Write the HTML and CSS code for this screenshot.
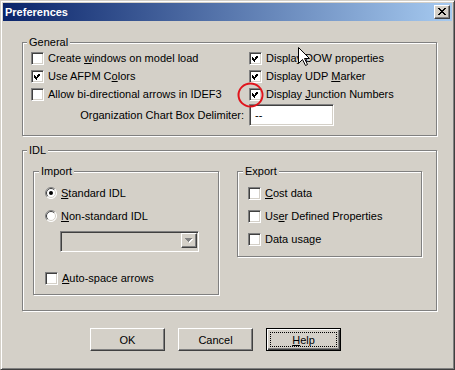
FILE: index.html
```html
<!DOCTYPE html>
<html lang="en">
<head>
  <meta charset="UTF-8" />
  <title>Preferences</title>
  <link rel="stylesheet" href="styles.css">
</head>
<body>
  <div class="window">
    <div class="titlebar">
      <span class="title">Preferences</span>
      <span class="close-btn">
        <svg width="8" height="7" viewBox="0 0 8 7" shape-rendering="crispEdges"><path d="M0 0h2v1H0zM6 0h2v1H6zM1 1h2v1H1zM5 1h2v1H5zM2 2h4v1H2zM3 3h2v1H3zM2 4h4v1H2zM1 5h2v1H1zM5 5h2v1H5zM0 6h2v1H0zM6 6h2v1H6z" fill="#000"/></svg>
      </span>
    </div>

    <div class="client">
      <fieldset class="group general">
        <legend>General</legend>
        <div class="general-grid">
          <label class="check"><span class="box"></span><span>Create <u>w</u>indows on model load</span></label>
          <label class="check"><span class="box"><svg width="7" height="7" viewBox="0 0 7 7" shape-rendering="crispEdges"><path d="M0 2h1v3H0zM1 3h1v3H1zM2 4h1v3H2zM3 3h1v3H3zM4 2h1v3H4zM5 1h1v3H5zM6 0h1v3H6z"/></svg></span><span>Display DOW properties</span></label>
          <label class="check"><span class="box"><svg width="7" height="7" viewBox="0 0 7 7" shape-rendering="crispEdges"><path d="M0 2h1v3H0zM1 3h1v3H1zM2 4h1v3H2zM3 3h1v3H3zM4 2h1v3H4zM5 1h1v3H5zM6 0h1v3H6z"/></svg></span><span>Use AFPM C<u>o</u>lors</span></label>
          <label class="check"><span class="box"><svg width="7" height="7" viewBox="0 0 7 7" shape-rendering="crispEdges"><path d="M0 2h1v3H0zM1 3h1v3H1zM2 4h1v3H2zM3 3h1v3H3zM4 2h1v3H4zM5 1h1v3H5zM6 0h1v3H6z"/></svg></span><span>Display UDP <u>M</u>arker</span></label>
          <label class="check"><span class="box"></span><span>Allow bi-directional arrows in IDEF3</span></label>
          <label class="check"><span class="box"><svg width="7" height="7" viewBox="0 0 7 7" shape-rendering="crispEdges"><path d="M0 2h1v3H0zM1 3h1v3H1zM2 4h1v3H2zM3 3h1v3H3zM4 2h1v3H4zM5 1h1v3H5zM6 0h1v3H6z"/></svg></span><span>Display <u>J</u>unction Numbers</span></label>
        </div>
        <div class="delim">
          <span class="delim-label">Organization Chart Box Delimiter:</span>
          <span class="field">--</span>
        </div>
      </fieldset>

      <fieldset class="group idl">
        <legend>IDL</legend>
        <div class="idl-cols">
          <fieldset class="group sub import">
            <legend>Import</legend>
            <div class="sub-body">
              <label class="check"><span class="radio"><svg width="12" height="12" viewBox="0 0 12 12"><circle cx="6" cy="6" r="5.5" fill="#fff"/><path d="M2.1 9.9A5.5 5.5 0 0 1 9.9 2.1" fill="none" stroke="#808080"/><path d="M9.9 2.1A5.5 5.5 0 0 1 2.1 9.9" fill="none" stroke="#fff"/><path d="M2.8 9.2A4.5 4.5 0 0 1 9.2 2.8" fill="none" stroke="#404040"/><path d="M9.2 2.8A4.5 4.5 0 0 1 2.8 9.2" fill="none" stroke="#d4d0c8"/><circle cx="6" cy="6" r="2" fill="#000"/></svg></span><span><u>S</u>tandard IDL</span></label>
              <label class="check"><span class="radio"><svg width="12" height="12" viewBox="0 0 12 12"><circle cx="6" cy="6" r="5.5" fill="#fff"/><path d="M2.1 9.9A5.5 5.5 0 0 1 9.9 2.1" fill="none" stroke="#808080"/><path d="M9.9 2.1A5.5 5.5 0 0 1 2.1 9.9" fill="none" stroke="#fff"/><path d="M2.8 9.2A4.5 4.5 0 0 1 9.2 2.8" fill="none" stroke="#404040"/><path d="M9.2 2.8A4.5 4.5 0 0 1 2.8 9.2" fill="none" stroke="#d4d0c8"/></svg></span><span><u>N</u>on-standard IDL</span></label>
              <div class="combo">
                <span class="combo-btn">
                  <svg width="8" height="5" viewBox="0 0 8 5" shape-rendering="crispEdges"><path d="M1 1h7v1H1zM2 2h5v1H2zM3 3h3v1H3zM4 4h1v1H4z" fill="#fff"/><path d="M0 0h7v1H0zM1 1h5v1H1zM2 2h3v1H2zM3 3h1v1H3z" fill="#808080"/></svg>
                </span>
              </div>
              <label class="check auto"><span class="box"></span><span><u>A</u>uto-space arrows</span></label>
            </div>
          </fieldset>

          <fieldset class="group sub export">
            <legend>Export</legend>
            <div class="sub-body">
              <label class="check"><span class="box"></span><span><u>C</u>ost data</span></label>
              <label class="check"><span class="box"></span><span>Us<u>e</u>r Defined Properties</span></label>
              <label class="check"><span class="box"></span><span>Data usa<u>g</u>e</span></label>
            </div>
          </fieldset>
        </div>
      </fieldset>

      <div class="buttons">
        <button class="btn">OK</button>
        <button class="btn">Cancel</button>
        <button class="btn default"><span class="focus"><u>H</u>elp</span></button>
      </div>
    </div>

    <!-- annotation + mouse pointer from the screenshot -->
    <svg class="overlay" width="455" height="370" viewBox="0 0 455 370">
      <ellipse cx="250.5" cy="95" rx="12" ry="11.5" fill="none" stroke="#e0141c" stroke-width="2"/>
      <path transform="translate(298 47)" d="M0.5 0.5V16.5L4.5 12.5L7.5 18.5L9.5 17.5L6.5 11.5H11.5Z" fill="#fff" stroke="#000"/>
    </svg>
  </div>
</body>
</html>
```

FILE: styles.css
```css
* {
  box-sizing: border-box;
}

body {
  margin: 0;
  background: #d4d0c8;
  font-family: "Liberation Sans", Arial, sans-serif;
  font-size: 11px;
  color: #000;
}

.window {
  position: relative;
  width: 455px;
  height: 370px;
  padding: 2px;
  background: #d4d0c8;
  border: 1px solid;
  border-color: #d4d0c8 #404040 #404040 #d4d0c8;
  box-shadow: inset 1px 1px #fff, inset -1px -1px #808080;
  display: flex;
  flex-direction: column;
}

.titlebar {
  height: 18px;
  padding: 0 2px;
  background: linear-gradient(90deg, #0a246a, #a6caf0);
  display: flex;
  align-items: center;
  justify-content: space-between;
}

.title {
  color: #fff;
  font-weight: bold;
}

.close-btn,
.combo-btn {
  background: #d4d0c8;
  border: 1px solid;
  border-color: #fff #404040 #404040 #fff;
  box-shadow: inset -1px -1px #808080;
  display: flex;
  align-items: center;
  justify-content: center;
}

.close-btn {
  width: 16px;
  height: 14px;
  padding: 0 0 1px 0;
}

.client {
  padding: 15px 15px 0 19px;
}

/* etched group boxes */
.group {
  margin: 0;
  min-width: 0;
  padding: 0 4px 9px 4px;
  border: 1px solid #808080;
  box-shadow: inset 1px 1px #fff, 1px 1px #fff;
}

.group legend {
  padding: 0 2px;
  line-height: 13px;
  background: #d4d0c8;
}

.general-grid {
  display: grid;
  grid-template-columns: 218px 1fr;
  grid-auto-rows: 18px;
  padding-left: 4px;
}

.check {
  height: 18px;
  display: flex;
  align-items: center;
  gap: 4px;
  white-space: nowrap;
}

.box {
  width: 13px;
  height: 13px;
  flex: none;
  padding: 3px;
  background: #fff;
  border: 1px solid;
  border-color: #808080 #fff #fff #808080;
  box-shadow: inset 1px 1px #404040, inset -1px -1px #d4d0c8;
  display: flex;
}

.box svg {
  margin: -1px 0 0 -1px;
}

.radio {
  width: 12px;
  height: 12px;
  flex: none;
  display: flex;
}

.delim {
  display: grid;
  grid-template-columns: 218px 1fr;
  align-items: center;
  margin-top: 1px;
  padding-left: 4px;
}

.delim-label {
  justify-self: end;
  padding-right: 5px;
}

.field {
  width: 85px;
  height: 22px;
  padding-left: 5px;
  background: #fff;
  border: 1px solid;
  border-color: #808080 #fff #fff #808080;
  box-shadow: inset 1px 1px #404040, inset -1px -1px #d4d0c8;
  display: flex;
  align-items: center;
}

.idl {
  margin-top: 8px;
  padding-bottom: 15px;
}

.idl-cols {
  display: flex;
  align-items: flex-start;
  gap: 18px;
  padding: 8px 0 0 6px;
}

.sub {
  padding: 0 5px 7px 5px;
}

.import {
  width: 186px;
}

.export {
  width: 185px;
  padding-bottom: 8px;
}

.sub-body {
  padding: 6px 0 0 6px;
}

.export .sub-body {
  padding-left: 5px;
}

.sub-body .check + .check {
  margin-top: 5px;
}

.combo {
  width: 139px;
  height: 21px;
  margin: 6px 0 0 15px;
  padding: 2px;
  background: #d4d0c8;
  border: 1px solid;
  border-color: #808080 #fff #fff #808080;
  box-shadow: inset 1px 1px #404040, inset -1px -1px #d4d0c8;
  display: flex;
  justify-content: flex-end;
}

.combo-btn {
  width: 16px;
  height: 15px;
  margin: -1px -1px 0 0;
}

.check.auto {
  margin-top: 17px;
}

.buttons {
  display: flex;
  gap: 13px;
  margin-top: 17px;
  padding-left: 68px;
}

.btn {
  width: 75px;
  height: 23px;
  padding: 0;
  font: inherit;
  color: #000;
  background: #d4d0c8;
  border: 1px solid;
  border-color: #fff #404040 #404040 #fff;
  box-shadow: inset -1px -1px #808080;
}

.btn.default {
  padding: 3px;
  border: 1px solid #000;
  box-shadow: inset 1px 1px #fff, inset -1px -1px #404040, inset -2px -2px #808080;
}

.focus {
  display: flex;
  align-items: center;
  justify-content: center;
  height: 100%;
  border: 1px dotted #000;
}

.overlay {
  position: absolute;
  left: -1px;
  top: -1px;
  pointer-events: none;
}
```
